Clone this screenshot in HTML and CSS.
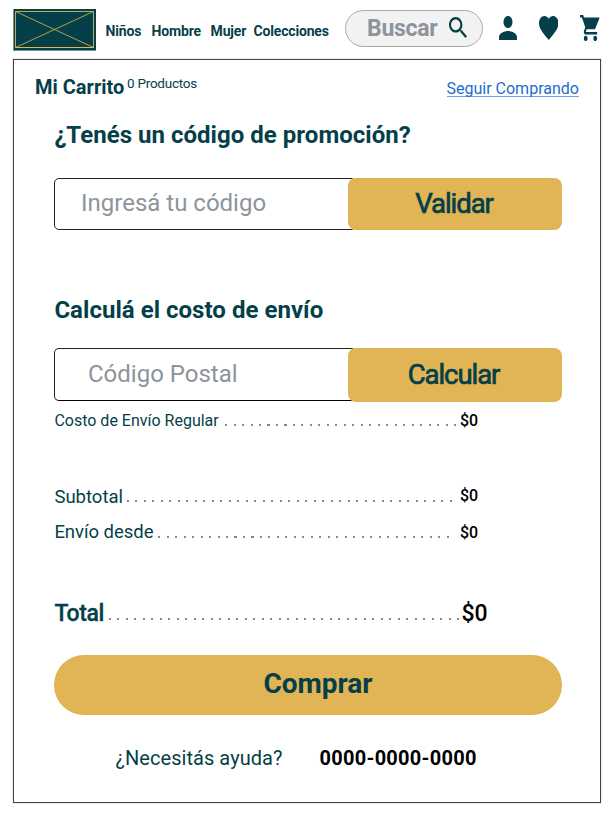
FILE: index.html
```html
<!DOCTYPE html>
<html lang="es">
<head>
<meta charset="utf-8">
<title>Mi Carrito</title>
<link rel="stylesheet" href="styles.css">
</head>
<body>
<header class="header">
  <svg class="logo" viewBox="0 0 83 42"><rect width="83" height="42" fill="#6f9497"/><rect x="1" width="82" height="41" fill="#053f49"/><path d="M2.500 2.500H80.500V38.500H2.500Z" fill="none" stroke="#c5a951"/><path d="M2.500 2.500L80.500 38.500M80.500 2.500L2.500 38.500" fill="none" stroke="#c5a951" stroke-width=".9"/><path d="M2 38.500H81" stroke="#e1b456"/></svg>
  <nav class="nav">
    <a class="nav-ninos">Niños</a><a class="nav-hombre">Hombre</a><a class="nav-mujer">Mujer</a><a class="nav-colecciones">Colecciones</a>
  </nav>
  <div class="search">
    <span class="search-label">Buscar</span>
    <svg class="search-icon" viewBox="3 3 17.500 17.500" preserveAspectRatio="none"><path d="M15.500 14h-.79l-.28-.27C15.410 12.590 16 11.110 16 9.500 16 5.910 13.090 3 9.500 3S3 5.910 3 9.500 5.910 16 9.500 16c1.610 0 3.090-.59 4.230-1.570l.27.28v.79l5 4.990L20.490 19l-4.990-5zm-6 0C7.010 14 5 11.990 5 9.500S7.010 5 9.500 5 14 7.010 14 9.500 11.990 14 9.500 14z"/></svg>
  </div>
  <svg class="icon user" viewBox="4 4 16 16" preserveAspectRatio="none"><path d="M12 12c2.210 0 4-1.790 4-4s-1.790-4-4-4-4 1.790-4 4 1.790 4 4 4zm0 2c-2.670 0-8 1.340-8 4v2h16v-2c0-2.660-5.330-4-8-4z"/></svg>
  <svg class="icon heart" viewBox="2 3 20 18.350" preserveAspectRatio="none"><path d="M12 21.350l-1.450-1.320C5.400 15.360 2 12.280 2 8.500 2 5.420 4.420 3 7.500 3c1.740 0 3.410.81 4.500 2.090C13.090 3.810 14.760 3 16.500 3 19.580 3 22 5.420 22 8.500c0 3.780-3.400 6.860-8.550 11.540L12 21.350z"/></svg>
  <svg class="icon cart" viewBox="1 2 21 20" preserveAspectRatio="none"><path d="M7 18c-1.100 0-1.990.9-1.990 2S5.900 22 7 22s2-.9 2-2-.9-2-2-2zM1 2v2h2l3.600 7.590-1.350 2.450c-.16.28-.25.61-.25.96 0 1.100.9 2 2 2h12v-2H7.420c-.14 0-.25-.11-.25-.25l.03-.12.9-1.630h7.450c.75 0 1.410-.41 1.750-1.030L21.700 4H5.210l-.94-2H1zm16 16c-1.100 0-1.990.9-1.990 2s.89 2 1.990 2 2-.9 2-2-.9-2-2-2z"/></svg>
</header>
<main class="panel">
  <div class="title-row">
    <h1 class="title">Mi Carrito</h1>
    <span class="count">0 Productos</span>
    <a class="continue">Seguir Comprando</a>
  </div>
  <section class="content">
    <h2 class="heading promo">¿Tenés un código de promoción?</h2>
    <div class="form">
      <div class="field"><span class="hint-code">Ingresá tu código</span></div>
      <button class="action"><span class="validate">Validar</span></button>
    </div>
    <h2 class="heading shipping">Calculá el costo de envío</h2>
    <div class="form form-postal">
      <div class="field"><span class="hint-postal">Código Postal</span></div>
      <button class="action"><span class="calculate">Calcular</span></button>
    </div>
    <div class="row regular"><span class="label">Costo de Envío Regular</span><i class="dots"></i><b class="price">$0</b></div>
    <div class="row subtotal"><span class="label">Subtotal</span><i class="dots"></i><b class="price">$0</b></div>
    <div class="row from"><span class="label">Envío desde</span><i class="dots"></i><b class="price">$0</b></div>
    <div class="row total"><span class="label">Total</span><i class="dots"></i><b class="price">$0</b></div>
    <button class="buy"><span>Comprar</span></button>
    <div class="help"><span class="question">¿Necesitás ayuda?</span><b class="phone">0000-0000-0000</b></div>
  </section>
</main>
</body>
</html>
```
FILE: styles.css
```css
* { box-sizing: border-box; }
body { margin: 0; width: 613px; height: 818px; overflow: hidden; background: #fff; color: #053f49; font-family: Roboto, sans-serif; }
h1, h2 { margin: 0; }
button { border: 0; padding: 0; font-family: inherit; color: inherit; background: #e1b456; }
span, a, b, h1, h2 { white-space: nowrap; }
svg { display: block; flex: none; fill: #053f49; }

.header { display: flex; align-items: flex-start; height: 59px; padding-left: 13px; }
.logo { width: 83px; height: 42px; margin-top: 9px; }
.nav { display: flex; width: 249px; padding: 21px 0 0 9.600px; font-size: 14px; line-height: 20px; font-weight: 700; letter-spacing: -.18px; }
.nav a { flex: none; }
.nav-ninos { width: 46px; }
.nav-hombre { width: 59px; }
.nav-mujer { width: 43px; }
.search { display: flex; flex: none; width: 138px; height: 37px; margin-top: 10px; padding-left: 21px; border: 1px solid #aaa; border-radius: 19px; background: #f2f2f2; }
.search-label { width: 82px; font-size: 23px; line-height: 35px; font-weight: 700; letter-spacing: -.3px; color: #8d949c; }
.search-icon { width: 18px; height: 21px; margin-top: 6px; }
.icon { margin-top: 16px; }
.user { width: 18px; height: 24px; margin-left: 16px; }
.heart { width: 19.500px; height: 24px; margin-left: 21.500px; }
.cart { width: 20px; height: 26px; margin: 15px 0 0 21.500px; }

.panel { width: 588px; height: 744px; margin-left: 13px; border: 1px solid #444; box-shadow: 0 0 1px #888; }
.title-row { display: flex; height: 52px; padding-left: 21px; }
.title { width: 92px; margin-top: 14px; font-size: 20px; line-height: 26px; }
.count { width: 319.500px; margin-top: 13px; font-size: 13.500px; line-height: 20px; letter-spacing: -.25px; }
.continue { height: 18px; margin-top: 19px; font-size: 16px; line-height: 19px; color: #1c6dd0; border-bottom: 1px solid #6da3e3; }

.content { display: flex; flex-direction: column; padding-left: 40px; }
.heading { padding-left: .4px; font-size: 24px; line-height: 30px; height: 30px; letter-spacing: .03px; }
.promo { margin-top: 8px; }
.form { display: flex; height: 52px; margin-top: 28px; }
.field { width: 302px; height: 52px; padding-left: 26px; border: 1px solid #222; border-radius: 5px; font-size: 24px; line-height: 49px; color: #8d949c; }
.action { width: 214px; height: 100%; margin-left: -8px; border-radius: 8px; font-size: 27.500px; line-height: 50px; letter-spacing: -1.050px; -webkit-text-stroke: .7px #053f49; }
.validate { padding-right: 2px; }
.shipping { margin-top: 65px; }
.form-postal { height: 54px; margin-top: 23px; }
.form-postal .field { height: 53px; padding-left: 33px; border-bottom-color: #000; line-height: 50px; }
.calculate { padding-right: 3px; }

.row { display: flex; height: 24px; line-height: 25px; font-size: 16px; }
.label { flex: none; padding-left: .4px; }
.dots { flex: none; height: 2px; margin-top: 16px; background: repeating-linear-gradient(90deg, #888 0 2px, transparent 2px 8.500px); }
.price { color: #000; font-size: 16px; font-weight: 500; }
.regular { margin-top: 6px; }
.regular .label { width: 171px; }
.regular .dots { width: 235px; }
.subtotal { margin-top: 52px; font-size: 18.500px; }
.subtotal .label { width: 73px; line-height: 26px; }
.subtotal .dots { width: 326px; margin: 16px 7px 0 0; }
.subtotal .price { line-height: 23px; }
.from { margin-top: 12px; font-size: 18.500px; }
.from .label { width: 104px; letter-spacing: -.04px; }
.from .dots { width: 292px; margin-right: 10px; }
.from .price { line-height: 26px; }
.total { height: 30px; margin-top: 54px; font-size: 23px; line-height: 31px; font-weight: 500; }
.total .label { width: 55px; letter-spacing: -.35px; -webkit-text-stroke: .3px #053f49; }
.total .dots { width: 352px; margin-top: 20px; }
.total .price { font-size: 23px; margin-left: .5px; }

.buy { width: 508px; height: 59.500px; padding-left: 20px; margin-top: 27px; border-radius: 30px; font-size: 28px; line-height: 56px; font-weight: 700; }
.buy span { display: block; height: 58px; }
.help { display: flex; margin-top: 29.500px; padding-left: 61.500px; font-size: 20px; line-height: 28px; }
.question { width: 204px; letter-spacing: .05px; }
.phone { color: #000; letter-spacing: .27px; }
```
